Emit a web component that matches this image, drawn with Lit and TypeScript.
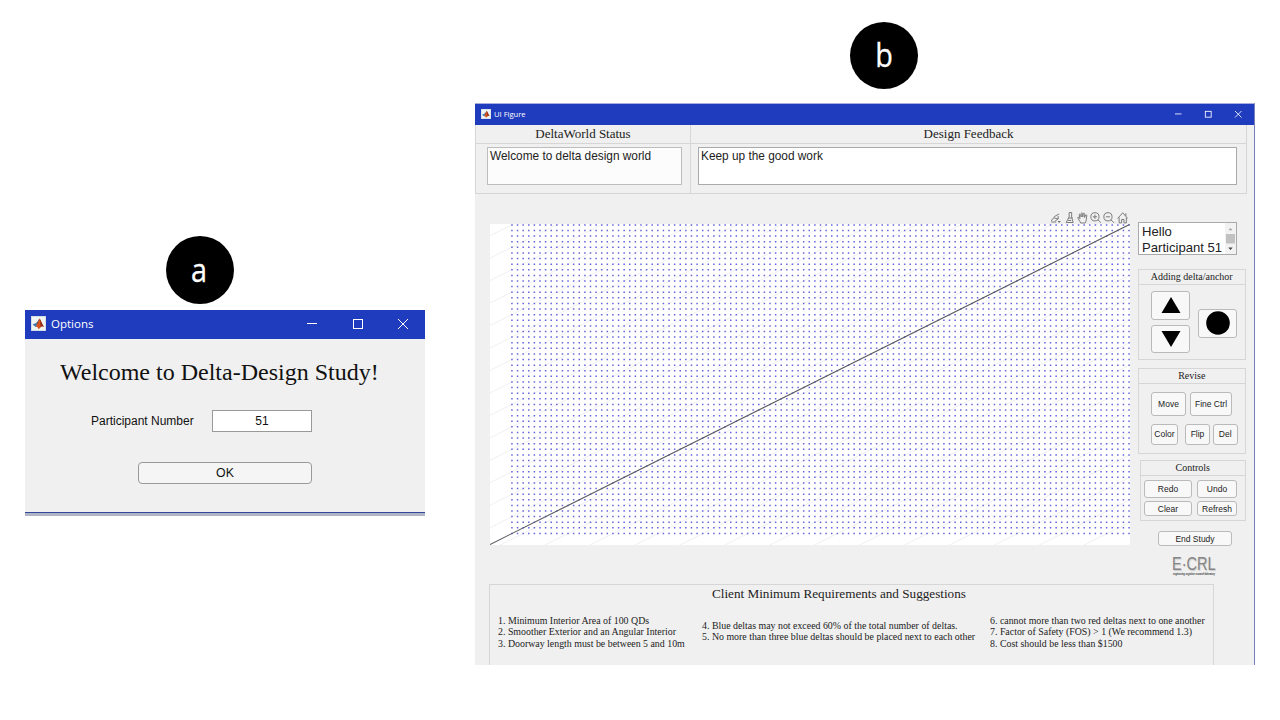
import { LitElement, html, css, svg } from "lit";
import { customElement, property } from "lit/decorators.js";

const UNIT = 5.61;
const range = (n: number) => Array.from({ length: n }, (_, i) => i);

@customElement("title-bar")
class TitleBar extends LitElement {
  @property() label = "";
  static styles = css`
    :host { display: flex; align-items: center; background: #203cbe; color: #fff; font-family: "Open Sans", sans-serif; }
    .icon { display: block; flex: none; width: var(--icon, 15px); height: var(--icon, 15px); margin-right: var(--icon-gap, 5.5px); }
    .label { flex: 1; white-space: nowrap; }
    .glyph { display: block; flex: none; width: var(--glyph, 10px); height: var(--glyph, 10px); margin-left: var(--glyph-gap, 35px); overflow: visible; }
    .stroke { fill: none; stroke: #fff; stroke-width: var(--weight, 1); }
  `;
  render() {
    return html`
      <svg class="icon" viewBox="0 0 15 15">
        <rect width="15" height="15" fill="#c9d3da" />
        <rect x=".7" y=".7" width="13.6" height="13.6" fill="#eff4f5" />
        <path d="M1.5 8.6 5 7l1.8 2.1L4.6 11z" fill="#3f78a8" />
        <path d="M5 7c1.7-.6 2.4-3.3 3.6-4.500L7 9z" fill="#243c63" />
        <path d="M4.8 10.800 8.600 2.600c1.500 1.700 2.500 6 4.400 8.300-1.600-.8-2.300-1.100-3.500.5-.8 1.100-1.600 1.700-2.400 1.300-.2-1.400-1-2-2.300-1.900z" fill="#d5541f" />
        <path d="M8.600 2.600c1.400 1.700 2.400 6 4.400 8.300-1.500-.9-2.300-1.100-3.300.2C9.500 8 9.400 5 8.600 2.600z" fill="#8b2a18" />
      </svg>
      <span class="label">${this.label}</span>
      <svg class="glyph" viewBox="0 0 10 10"><path class="stroke" d="M0 4.500h10" /></svg>
      <svg class="glyph" viewBox="0 0 10 10"><rect class="stroke" x=".5" y=".5" width="9" height="9" /></svg>
      <svg class="glyph" viewBox="0 0 10 10"><path class="stroke" d="M0 0l10 10M10 0L0 10" /></svg>
    `;
  }
}

@customElement("delta-plot")
class DeltaPlot extends LitElement {
  static styles = css`
    :host { display: block; width: 640px; height: 321px; background: #fff; }
    .plot { display: block; }
    .guide { stroke: #f0f0f2; stroke-width: 1; }
    .axis { stroke: #55555c; stroke-width: 1.1; }
    .dots { stroke: #6464dc; stroke-width: 1.5; fill: none; stroke-dasharray: 1.5 4.11; }
  `;
  render() {
    const guides = range(42).map((k) => {
      const y = 11.7 + k * 22.46;
      return svg`<line class="guide" x1="0" y1=${y} x2="640" y2=${y - 320} />`;
    });
    const rows = range(56).map((r) => svg`<path class="dots" d="M21.2 ${0.9 + r * UNIT}H640" />`);
    return html`<svg class="plot" width="640" height="321" viewBox="0 0 640 321">
      ${guides}${rows}<line class="axis" x1="0" y1="320.5" x2="639.5" y2="0.5" />
    </svg>`;
  }
}

@customElement("options-window")
class OptionsWindow extends LitElement {
  static styles = css`
    :host { display: flex; flex-direction: column; box-sizing: border-box; width: 400px; height: 206px; background: #f0f0f0; border-bottom: 3px solid #b0b5c6; font: 12px "Liberation Sans", sans-serif; color: #111; }
    .bar { height: 29px; box-sizing: border-box; padding: 0 17px 2px 5.5px; font-size: 11.5px; --glyph-gap: 35.5px; }
    .body { flex: 1; border-bottom: 1px solid #33489b; display: flex; flex-direction: column; }
    .title { font: 24px/28px "Liberation Serif", serif; margin: 19px 0 0 35px; white-space: nowrap; }
    .row { display: flex; align-items: center; margin: 24px 0 0 66px; gap: 18px; white-space: nowrap; }
    .name { width: 103px; }
    .field { width: 98px; height: 20px; line-height: 21px; border: 1px solid #999; background: #fff; text-align: center; }
    .ok { margin: 30px 0 0 113px; width: 172px; height: 20px; line-height: 20px; border: 1px solid #999; border-radius: 4px; background: #f5f5f5; text-align: center; font-size: 12.3px; }
  `;
  render() {
    return html`
      <title-bar class="bar" label="Options"></title-bar>
      <div class="body">
        <div class="title">Welcome to Delta-Design Study!</div>
        <div class="row"><span class="name">Participant Number</span><div class="field">51</div></div>
        <div class="ok">OK</div>
      </div>
    `;
  }
}

@customElement("figure-window")
class FigureWindow extends LitElement {
  static styles = css`
    :host { display: flex; flex-direction: column; box-sizing: border-box; width: 780px; height: 562px; border-top: 1px solid #a7aedb; border-right: 1.5px solid #7482b8; background: #f0f0f0; color: #222; font: 8.5px "Liberation Sans", sans-serif; overflow: hidden; }
    .bar { flex: none; height: 21px; box-sizing: border-box; padding: 0 13px 1px 5.5px; font-size: 7.6px; --icon: 10px; --icon-gap: 3.5px; --glyph: 6.5px; --glyph-gap: 23.5px; --weight: 1.3; }
    .status { display: flex; flex: none; height: 69px; }
    .pane { box-sizing: border-box; border-right: 1px solid #d6d6d6; border-bottom: 1.5px solid #d6d6d6; }
    .pane.world { width: 216px; border-left: 1px solid #d6d6d6; }
    .pane.feedback { width: 556px; }
    .head { border-bottom: 1px solid #d6d6d6; text-align: center; font-family: "Liberation Serif", serif; white-space: nowrap; }
    .status .head { height: 18px; font-size: 13px; line-height: 18px; }
    .area { box-sizing: border-box; margin: 3px 8.5px 0 10.5px; height: 38px; border: 1px solid #bdbdbd; background: #fcfcfc; padding: 0 2.5px; font-size: 11.85px; line-height: 16px; white-space: nowrap; }
    .feedback .area { margin: 3px 9px 0 6.5px; background: #fff; border-color: #aaa; }
    .main { display: flex; flex: none; height: 390px; }
    .stage { width: 640px; margin: 16px 0 0 15px; }
    .tools { height: 14px; display: flex; justify-content: flex-end; gap: 2px; padding-right: 2px; }
    .tool { display: block; width: 11.3px; height: 13px; margin-top: 1px; fill: none; stroke: #7c7c7c; stroke-width: 1; }
    .side { width: 108px; margin: 28px 0 0 8px; display: flex; flex-direction: column; }
    .hello { box-sizing: border-box; width: 99px; height: 33px; display: flex; border: 1px solid #aaa; background: #fff; font-size: 13.1px; line-height: 15.5px; white-space: nowrap; }
    .greeting { flex: 1; padding: 1px 0 0 3px; }
    .scroll { width: 11px; background: #f2f2f2; display: block; }
    .group { box-sizing: border-box; width: 107.5px; border: 1px solid #d6d6d6; }
    .group .head { height: 14px; font-size: 10px; line-height: 14px; }
    .btn { box-sizing: border-box; border: 1px solid #bababa; border-radius: 3px; background: #f8f8f8; display: flex; align-items: center; justify-content: center; white-space: nowrap; }
    .shape { display: block; fill: #000; }
    .add { height: 91px; margin-top: 14px; }
    .shapes { display: flex; padding: 6px 0 0 12px; align-items: flex-start; gap: 8px; }
    .pair { display: flex; flex-direction: column; gap: 5px; }
    .key { width: 39px; height: 28.5px; }
    .key.anchor { margin-top: 18px; }
    .revise { height: 86px; margin-top: 8px; }
    .row { display: flex; }
    .row.r1 { padding: 7.5px 0 0 12px; gap: 4px; }
    .row.r2 { padding: 8.5px 0 0 12px; gap: 3px; }
    .move { width: 35px; height: 24px; }
    .fine { width: 42px; height: 24px; }
    .color { width: 27px; height: 20.5px; margin-right: 4px; }
    .flip { width: 25px; height: 20.5px; }
    .del { width: 24.5px; height: 20.5px; }
    .controls { width: 105.5px; height: 61px; margin: 6px 0 0 2px; }
    .cells { display: grid; grid-template: 18px 15px / 48px 40px; gap: 3px 5px; padding: 4px 0 0 3px; }
    .end { width: 74px; height: 15px; margin: 10px 0 0 20px; }
    .brand { width: 46px; margin: 9px 0 0 34px; color: #858585; white-space: nowrap; }
    .mark { font: 17.5px/18px "Liberation Sans", sans-serif; transform: scaleX(.83); transform-origin: left; text-shadow: 1px 1px 1px #ccc; }
    .tag { display: block; margin-top: 0; width: 44px; height: 3px; overflow: visible; font: italic bold 3px "Liberation Sans", sans-serif; fill: #333; }
    .client { flex: none; box-sizing: border-box; width: 725px; height: 90px; margin: 0 0 0 14px; border: 1px solid #d6d6d6; border-bottom: 0; font-family: "Liberation Serif", serif; }
    .heading { width: 254px; margin: 1px 0 0 222px; font-size: 13.18px; line-height: 16px; white-space: nowrap; }
    .lists { display: flex; font-size: 9.9px; line-height: 11.3px; white-space: nowrap; padding: 13px 0 0 8px; }
    .first { width: 204px; }
    .second { width: 288px; padding-top: 5px; }
  `;
  render() {
    return html`
      <title-bar class="bar" label="UI Figure"></title-bar>
      <div class="status">
        <div class="pane world"><div class="head">DeltaWorld Status</div><div class="area">Welcome to delta design world</div></div>
        <div class="pane feedback"><div class="head">Design Feedback</div><div class="area">Keep up the good work</div></div>
      </div>
      <div class="main">
        <div class="stage">
          <div class="tools">
            <svg class="tool" viewBox="0 0 11 13"><path d="M1 11h5M1 10l4-5 4-2M4 7l4 1-3 2M8 5v3" /><path d="M7.5 10h3.2L9 12z" fill="#6e6e6e" stroke="none" /></svg>
            <svg class="tool" viewBox="0 0 11 13"><path d="M5 1.5h2.5V6l1.5 5.5H2L5 6zM4 7h4.5M4 9.5h3" /></svg>
            <svg class="tool" viewBox="0 0 11 13"><path d="M3.4 12C3 10 1 8.300 .6 6.500c.8-.7 1.600.3 2.200 1.200L2 3.500c.8-.8 1.400.2 1.600 1.200L4 6V2.300c.8-1 1.600-.2 1.600.8V6l.4-3.500c.8-.8 1.600 0 1.500 1L7.400 6.500l.9-2.500c1-.6 1.500.1 1.300 1C9 8 9.500 9.500 8 12z" /></svg>
            <svg class="tool" viewBox="0 0 11 13"><circle cx="4.800" cy="5.800" r="4.100" /><path d="M7.800 8.800l3 3M2.700 5.800h4.200M4.800 3.700v4.200" /></svg>
            <svg class="tool" viewBox="0 0 11 13"><circle cx="4.800" cy="5.800" r="4.100" /><path d="M7.800 8.800l3 3M2.700 5.800h4.200" /></svg>
            <svg class="tool" viewBox="0 0 11 13"><path d="M.4 7.500l5.200-5.700 5 5.700M2 6.500v5.400h2.500V8.500h2.300v3.400h2.400V6.500M8.700 5V2.300" /></svg>
          </div>
          <delta-plot></delta-plot>
        </div>
        <div class="side">
          <div class="hello">
            <div class="greeting">Hello<br />Participant 51</div>
            <svg class="scroll" viewBox="0 0 11 31" width="11" height="31">
              <path d="M3.500 7.200h4l-2-2.200z" fill="#a0a0a0" /><rect x="1" y="11" width="9" height="9.500" fill="#c1c1c1" /><path d="M3.300 24.500h4.400l-2.200 2.500z" fill="#404040" />
            </svg>
          </div>
          <div class="group add">
            <div class="head">Adding delta/anchor</div>
            <div class="shapes">
              <div class="pair">
                <div class="btn key"><svg class="shape" width="20" height="16"><path d="M10 0l9.500 16H.5z" /></svg></div>
                <div class="btn key"><svg class="shape" width="20" height="16"><path d="M10 16L.5 0h19z" /></svg></div>
              </div>
              <div class="btn key anchor"><svg class="shape" width="24" height="24"><circle cx="12" cy="12" r="11.800" /></svg></div>
            </div>
          </div>
          <div class="group revise">
            <div class="head">Revise</div>
            <div class="row r1"><div class="btn move">Move</div><div class="btn fine">Fine Ctrl</div></div>
            <div class="row r2"><div class="btn color">Color</div><div class="btn flip">Flip</div><div class="btn del">Del</div></div>
          </div>
          <div class="group controls">
            <div class="head">Controls</div>
            <div class="cells"><div class="btn">Redo</div><div class="btn">Undo</div><div class="btn">Clear</div><div class="btn">Refresh</div></div>
          </div>
          <div class="btn end">End Study</div>
          <div class="brand">
            <div class="mark">E·CRL</div>
            <svg class="tag" viewBox="0 0 44 3"><text x="1" y="1.500" textLength="42" lengthAdjust="spacingAndGlyphs">engineering cognition research laboratory</text></svg>
          </div>
        </div>
      </div>
      <div class="client">
        <div class="heading">Client Minimum Requirements and Suggestions</div>
        <div class="lists">
          <div class="first">1. Minimum Interior Area of 100 QDs<br />2. Smoother Exterior and an Angular Interior<br />3. Doorway length must be between 5 and 10m</div>
          <div class="second">4. Blue deltas may not exceed 60% of the total number of deltas.<br />5. No more than three blue deltas should be placed next to each other</div>
          <div class="third">6. cannot more than two red deltas next to one another<br />7. Factor of Safety (FOS) &gt; 1 (We recommend 1.3)<br />8. Cost should be less than $1500</div>
        </div>
      </div>
    `;
  }
}

@customElement("app-root")
class AppRoot extends LitElement {
  static styles = css`
    :host { display: flex; box-sizing: border-box; width: 1280px; height: 720px; background: #fff; padding-left: 25px; gap: 50px; overflow: hidden; }
    .left { padding-top: 236px; width: 400px; }
    .right { padding-top: 22px; width: 780px; }
    .badge { width: 68px; height: 68px; border-radius: 50%; background: #000; color: #fff; text-align: center; font: 32px/68px "Open Sans", sans-serif; }
    .left .badge { margin: 0 0 6px 141px; }
    .right .badge { height: 67px; line-height: 66px; margin: 0 0 14px 375px; }
    .char { display: block; transform: scaleX(.9); -webkit-text-stroke: .3px #fff; }
    .left .char { margin-left: -2px; }
  `;
  render() {
    return html`
      <div class="left"><div class="badge"><span class="char">a</span></div><options-window></options-window></div>
      <div class="right"><div class="badge"><span class="char">b</span></div><figure-window></figure-window></div>
    `;
  }
}
